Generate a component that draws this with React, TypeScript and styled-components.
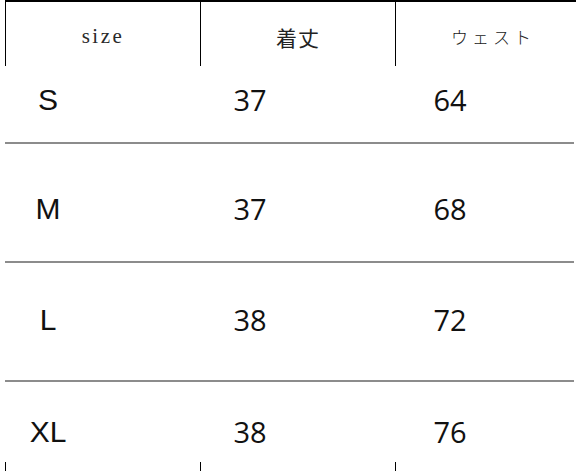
import React from "react";
import styled, { createGlobalStyle } from "styled-components";

type SizeRow = {
  size: string;
  length: string;
  waist: string;
  height: number;
  padTop: number;
};

const rows: SizeRow[] = [
  { size: "S", length: "37", waist: "64", height: 78, padTop: 14 },
  { size: "M", length: "37", waist: "68", height: 119, padTop: 45 },
  { size: "L", length: "38", waist: "72", height: 119, padTop: 37 },
];

const lastRow = { size: "XL", length: "38", waist: "76" };

const GlobalStyle = createGlobalStyle`
  html, body {
    margin: 0;
    padding: 0;
    background: #ffffff;
  }
`;

const App: React.FC = () => {
  return (
    <>
      <GlobalStyle />
      <Page>
        <Header>
          <HeadCell>
            <LatinHead>size</LatinHead>
          </HeadCell>
          <HeadCell>
            <KanjiHead>着丈</KanjiHead>
          </HeadCell>
          <HeadCell>
            <KanaHead>ウェスト</KanaHead>
          </HeadCell>
        </Header>

        {rows.map((r) => (
          <Row key={r.size} $height={r.height} $padTop={r.padTop} $divider>
            <SizeLabel>{r.size}</SizeLabel>
            <Value>{r.length}</Value>
            <Value>{r.waist}</Value>
          </Row>
        ))}

        <Row $height={80} $padTop={30}>
          <SizeLabel>{lastRow.size}</SizeLabel>
          <Value>{lastRow.length}</Value>
          <Value>{lastRow.waist}</Value>
        </Row>

        <TickStrip>
          <Tick />
          <Tick />
          <Tick />
        </TickStrip>
      </Page>
    </>
  );
};

export default App;

const Page = styled.div`
  width: 576px;
  height: 471px;
  overflow: hidden;
  background: #ffffff;
  display: flex;
  flex-direction: column;
`;

const Header = styled.div`
  display: grid;
  grid-template-columns: 195px 195px 195px;
  margin-left: 5px;
  height: 66px;
  box-sizing: border-box;
  border-top: 2px solid #000;
`;

const HeadCell = styled.div`
  display: flex;
  align-items: center;
  justify-content: center;
  border-left: 1px solid #000;
  padding-top: 5px;
`;

const LatinHead = styled.span`
  font-family: "Liberation Serif", serif;
  font-size: 21px;
  letter-spacing: 2.5px;
  color: #2a2a2a;
`;

const KanjiHead = styled.span`
  font-family: "Noto Sans CJK JP", sans-serif;
  font-size: 21px;
  font-weight: 400;
  color: #222;
  letter-spacing: 1px;
`;

const KanaHead = styled.span`
  font-family: "Noto Sans CJK JP", sans-serif;
  font-size: 17px;
  font-weight: 300;
  color: #222;
  letter-spacing: 4px;
`;

const Row = styled.div<{ $height: number; $padTop: number; $divider?: boolean }>`
  display: grid;
  grid-template-columns: 86px 318px 82px;
  align-items: start;
  justify-items: center;
  margin-left: 5px;
  width: 569px;
  box-sizing: border-box;
  height: ${({ $height }) => $height}px;
  padding-top: ${({ $padTop }) => $padTop}px;
  border-bottom: ${({ $divider }) => ($divider ? "2px solid #8c8c8c" : "none")};
`;

const SizeLabel = styled.span`
  font-family: "Liberation Sans", Arial, sans-serif;
  font-size: 30px;
  line-height: 40px;
  color: #111;
`;

const Value = styled.span`
  font-family: "Open Sans", sans-serif;
  font-size: 29px;
  line-height: 40px;
  color: #111;
`;

const TickStrip = styled.div`
  display: grid;
  grid-template-columns: 195px 195px 195px;
  margin-left: 5px;
  height: 9px;
`;

const Tick = styled.div`
  border-left: 1px solid #000;
`;
